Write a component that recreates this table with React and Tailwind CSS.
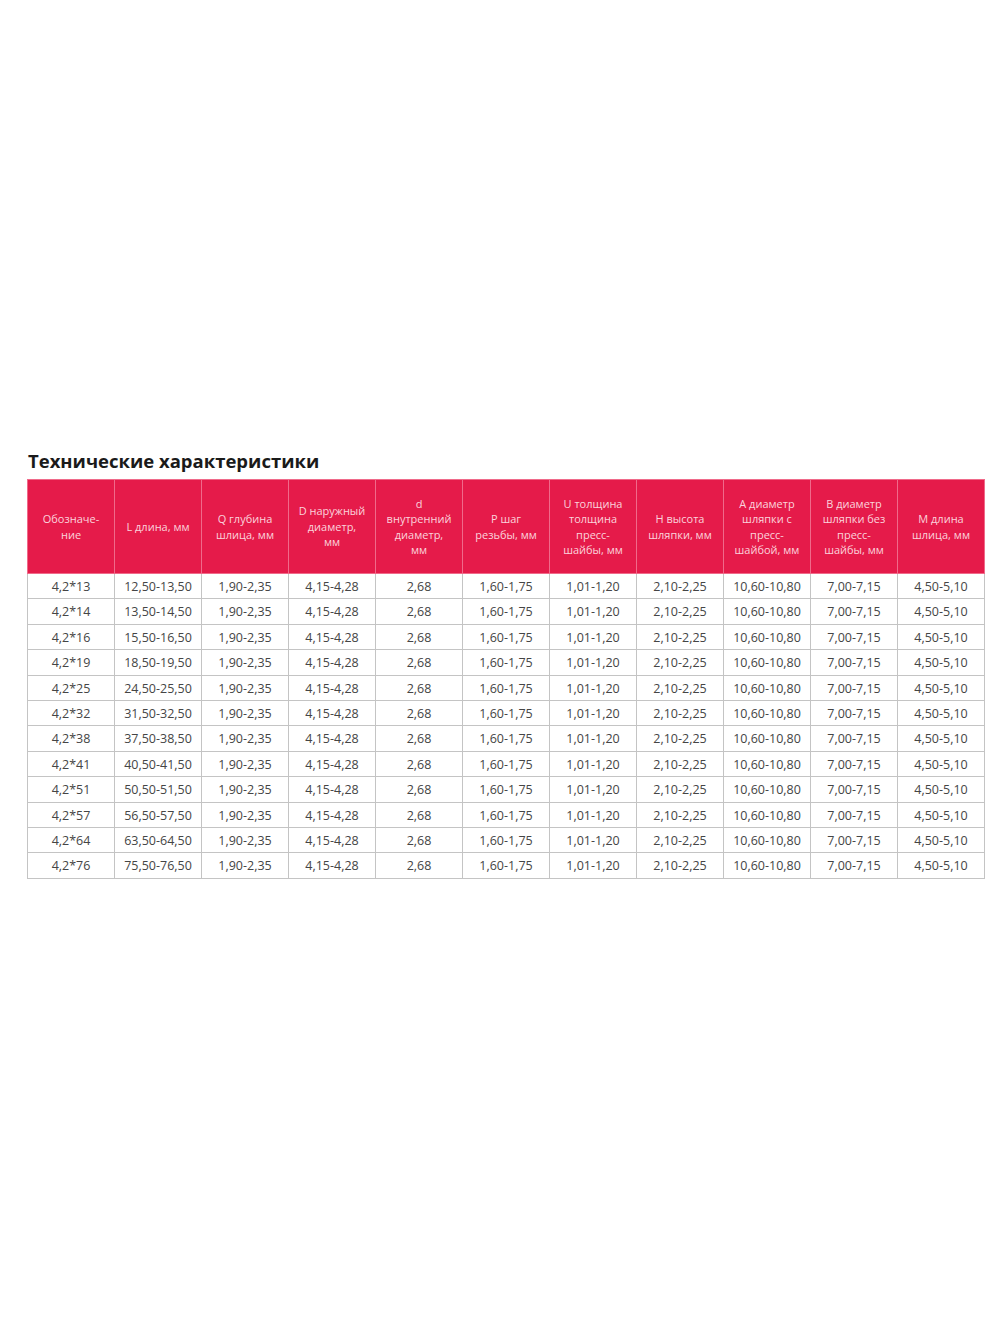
import React from 'react';

const headers = [
  ['Обозначе-', 'ние'],
  ['L длина, мм'],
  ['Q глубина', 'шлица, мм'],
  ['D наружный', 'диаметр,', 'мм'],
  ['d', 'внутренний', 'диаметр,', 'мм'],
  ['P шаг', 'резьбы, мм'],
  ['U толщина', 'толщина', 'пресс-', 'шайбы, мм'],
  ['H высота', 'шляпки, мм'],
  ['A диаметр', 'шляпки с', 'пресс-', 'шайбой, мм'],
  ['B диаметр', 'шляпки без', 'пресс-', 'шайбы, мм'],
  ['M длина', 'шлица, мм'],
];

const sizes = [
  ['13', '12,50-13,50'],
  ['14', '13,50-14,50'],
  ['16', '15,50-16,50'],
  ['19', '18,50-19,50'],
  ['25', '24,50-25,50'],
  ['32', '31,50-32,50'],
  ['38', '37,50-38,50'],
  ['41', '40,50-41,50'],
  ['51', '50,50-51,50'],
  ['57', '56,50-57,50'],
  ['64', '63,50-64,50'],
  ['76', '75,50-76,50'],
];

const rest = ['1,90-2,35', '4,15-4,28', '2,68', '1,60-1,75', '1,01-1,20', '2,10-2,25', '10,60-10,80', '7,00-7,15', '4,50-5,10'];

export default function App() {
  return (
    <div className="w-[1000px] h-[1333px] bg-white" style={{ fontFamily: '"Open Sans", "Noto Sans", sans-serif' }}>
      <div className="pt-[448px] pl-[27px]">
        <h2 className="text-[18.5px] font-bold text-[#1a1a1a] leading-[26px] pl-[1px] mb-[5px]">Технические характеристики</h2>
        <table className="table-fixed border-collapse w-[957px]">
          <colgroup>
            {headers.map((_, i) => (
              <col key={i} className="w-[87px]" />
            ))}
          </colgroup>
          <thead>
            <tr className="h-[94px]">
              {headers.map((lines, i) => (
                <th
                  key={i}
                  className="bg-[#e51b4a] border border-[#f06a8a] text-[#fbd3dc] font-normal text-[11px] leading-[15.5px] text-center align-middle px-1"
                >
                  {lines.map((l, j) => (
                    <div key={j}>{l}</div>
                  ))}
                </th>
              ))}
            </tr>
          </thead>
          <tbody>
            {sizes.map(([n, l]) => (
              <tr key={n}>
                {[`4,2*${n}`, l, ...rest].map((v, i) => (
                  <td key={i} className="border border-[#c4c4c4] text-[12.5px] text-[#454545] text-center leading-[22.4px] pt-[2px]">
                    {v}
                  </td>
                ))}
              </tr>
            ))}
          </tbody>
        </table>
      </div>
    </div>
  );
}
